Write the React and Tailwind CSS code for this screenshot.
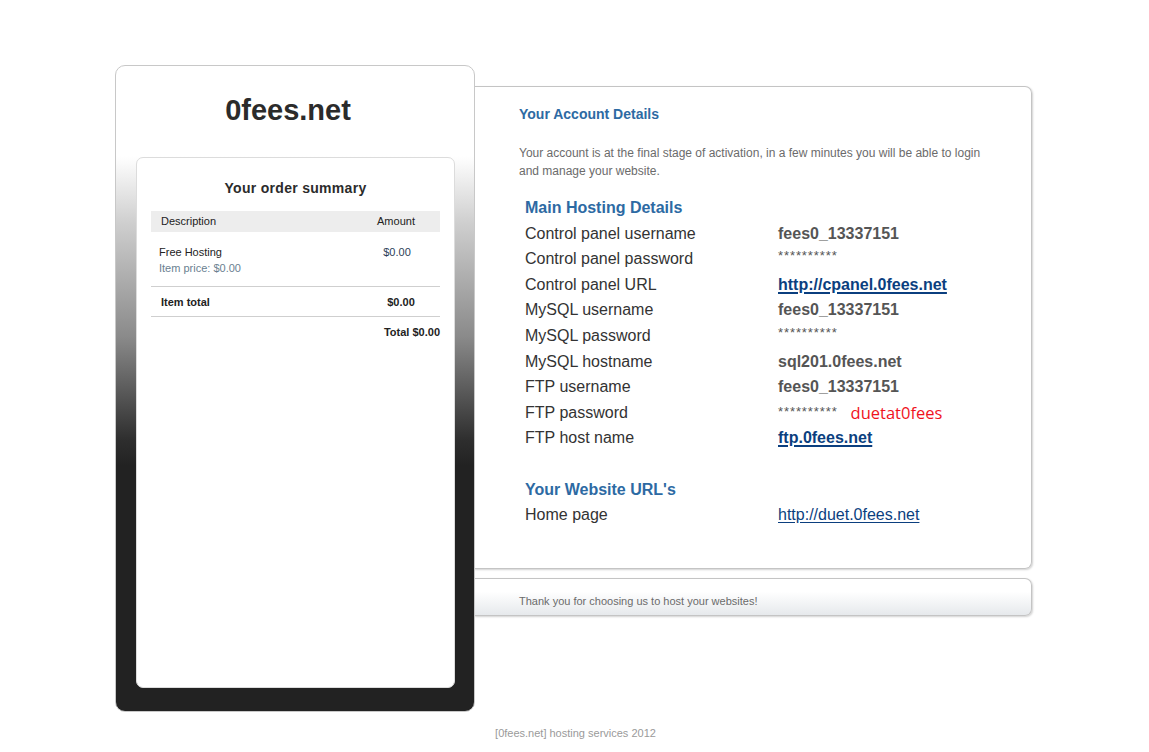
import React from 'react';

const rows = [
  { label: 'Control panel username', value: 'fees0_13337151', kind: 'bold' },
  { label: 'Control panel password', value: '**********', kind: 'pass' },
  { label: 'Control panel URL', value: 'http://cpanel.0fees.net', kind: 'link' },
  { label: 'MySQL username', value: 'fees0_13337151', kind: 'bold' },
  { label: 'MySQL password', value: '**********', kind: 'pass' },
  { label: 'MySQL hostname', value: 'sql201.0fees.net', kind: 'bold' },
  { label: 'FTP username', value: 'fees0_13337151', kind: 'bold' },
  { label: 'FTP password', value: '**********', kind: 'pass', note: 'duetat0fees' },
  { label: 'FTP host name', value: 'ftp.0fees.net', kind: 'link' },
];

function Value({ row }) {
  if (row.kind === 'link') {
    return <a className="font-bold text-[#0b3f7f] underline decoration-2 underline-offset-2">{row.value}</a>;
  }
  if (row.kind === 'pass') {
    return (
      <span className="flex items-baseline">
        <span className="text-[13px] text-[#555] tracking-[0.9px] relative -top-[3px]">{row.value}</span>
        {row.note && (
          <span className="ml-[13px] text-[16.5px] text-[#f0131e] font-['Open_Sans','Liberation_Sans',sans-serif]">{row.note}</span>
        )}
      </span>
    );
  }
  return <span className="font-bold text-[#555]">{row.value}</span>;
}

export default function App() {
  return (
    <div className="min-h-[752px] bg-white font-['Liberation_Sans',Arial,sans-serif]">
      <div className="w-[917px] ml-[115px] pt-[65px] flex">
        {/* order summary */}
        <div className="w-[360px] h-[647px] shrink-0 rounded-[10px] border border-[#c8c8c8] bg-[linear-gradient(to_bottom,#ffffff_0%,#ffffff_14%,#d0d0d0_24%,#8a8a8a_42%,#2e2e2e_58%,#222222_62%,#222222_100%)] flex flex-col relative z-10">
          <div className="h-[91px] flex items-center justify-center pb-[2px] pr-[14px]">
            <h1 className="text-[29px] font-bold text-[#2b2b2b]">0fees.net</h1>
          </div>
          <div className="ml-[20px] mr-[19px] h-[531px] bg-white rounded-[7px] border border-[#dcdcdc] px-[14px] pt-[20px]">
            <h2 className="text-center text-[14px] font-bold text-[#2b2b2b] tracking-[0.3px] leading-[20px]">Your order summary</h2>
            <div className="mt-[13px] text-[11px] text-[#222]">
              <div className="flex bg-[#ededed] h-[21px] items-center">
                <div className="flex-1 pl-[10px]">Description</div>
                <div className="w-[86px] text-center pr-[2px]">Amount</div>
              </div>
              <div className="flex pt-[13px] h-[55px] border-b border-[#cfcfcf]">
                <div className="flex-1 pl-[8px]">
                  <div className="leading-[14px]">Free Hosting</div>
                  <div className="leading-[18px] text-[#6a7f91]">Item price: $0.00</div>
                </div>
                <div className="w-[86px] text-center leading-[14px] text-[#2c3e57]">$0.00</div>
              </div>
              <div className="flex h-[30px] items-center pt-[2px] border-b border-[#cfcfcf] font-bold">
                <div className="flex-1 pl-[10px]">Item total</div>
                <div className="w-[86px] text-center pl-[8px]">$0.00</div>
              </div>
              <div className="text-right font-bold pt-[7px]">Total $0.00</div>
            </div>
          </div>
        </div>

        {/* account details */}
        <div className="flex-1 pt-[21px] -ml-px">
          <div className="h-[483px] border-y border-r border-[#c4c4c4] rounded-r-[7px] shadow-[1px_1px_2px_rgba(0,0,0,0.18)] pl-[45px] pt-[18px]">
            <h2 className="text-[14px] font-bold text-[#2d6aa3] leading-[18px]">Your Account Details</h2>
            <p className="mt-[21px] text-[12px] leading-[18px] text-[#6b6b6b] w-[480px]">
              Your account is at the final stage of activation, in a few minutes you will be able to login and manage your website.
            </p>
            <div className="mt-[15px] pl-[6px] text-[16px] leading-[25.6px] text-[#333]">
              <h3 className="font-bold text-[#2d6aa3]">Main Hosting Details</h3>
              {rows.map((row) => (
                <div key={row.label} className="flex h-[25.6px]">
                  <div className="w-[253px]">{row.label}</div>
                  <Value row={row} />
                </div>
              ))}
              <div className="h-[25.6px]" />
              <h3 className="font-bold text-[#2d6aa3]">Your Website URL's</h3>
              <div className="flex">
                <div className="w-[253px]">Home page</div>
                <a className="text-[#0b3f7f] underline underline-offset-2">http://duet.0fees.net</a>
              </div>
            </div>
          </div>
          <div className="mt-[9px] h-[38px] border-y border-r border-[#c4c4c4] rounded-r-[7px] shadow-[1px_1px_2px_rgba(0,0,0,0.18)] bg-[linear-gradient(to_bottom,#ffffff_0%,#ffffff_35%,#e6e9ec_100%)] pl-[45px] pt-[15px]">
            <p className="text-[11px] leading-[14px] text-[#6b6b6b]">Thank you for choosing us to host your websites!</p>
          </div>
        </div>
      </div>
      <p className="mt-[14px] text-center text-[11px] leading-[14px] text-[#9a9a9a] pl-[2px]">[0fees.net] hosting services 2012</p>
    </div>
  );
}
